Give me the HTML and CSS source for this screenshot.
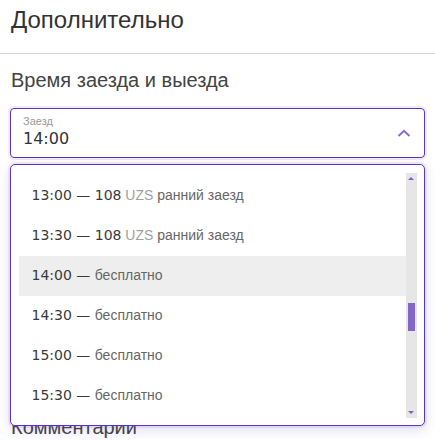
FILE: index.html
```html
<!DOCTYPE html>
<html lang="ru">
<head>
<meta charset="utf-8">
<title>Дополнительно</title>
<link rel="stylesheet" href="styles.css">
</head>
<body>
<div class="page">
  <h2 class="title">Дополнительно</h2>
  <hr class="divider">
  <section class="times">
    <h3 class="subtitle">Время заезда и выезда</h3>
    <div class="field">
      <div class="select">
        <div class="select-text">
          <span class="select-label">Заезд</span>
          <span class="select-value">14:00</span>
        </div>
        <svg class="caret" width="14" height="8" viewBox="0 0 14 8"><path d="M1.5 7 L7 1.8 L12.5 7" fill="none" stroke="#8a6bd2" stroke-width="2"/></svg>
      </div>
      <div class="dropdown">
        <ul class="options">
          <li class="option"><span class="time">13:00 — 108</span> <span class="cur">UZS</span> <span class="note">ранний заезд</span></li>
          <li class="option"><span class="time">13:30 — 108</span> <span class="cur">UZS</span> <span class="note">ранний заезд</span></li>
          <li class="option active"><span class="time">14:00 — </span><span class="note">бесплатно</span></li>
          <li class="option"><span class="time">14:30 — </span><span class="note">бесплатно</span></li>
          <li class="option"><span class="time">15:00 — </span><span class="note">бесплатно</span></li>
          <li class="option"><span class="time">15:30 — </span><span class="note">бесплатно</span></li>
        </ul>
        <div class="scrollbar">
          <span class="arrow up"></span>
          <div class="track"><span class="thumb"></span></div>
          <span class="arrow down"></span>
        </div>
      </div>
    </div>
  </section>
  <h3 class="subtitle comments">Комментарии</h3>
</div>
</body>
</html>
```
FILE: styles.css
```css
* { box-sizing: border-box; }

body {
  margin: 0;
  background: #fff;
  font-family: "Liberation Sans", Arial, sans-serif;
  color: #333;
}

.page {
  padding: 0 0 0 11px;
}

.title {
  margin: 0;
  padding-top: 6px;
  font-size: 24px;
  font-weight: normal;
  line-height: 28px;
  color: #333;
}

.divider {
  border: 0;
  border-top: 1px solid #d6d6d6;
  margin: 19px 0 0 -11px;
}

.subtitle {
  margin: 0;
  font-size: 20px;
  font-weight: normal;
  line-height: 24px;
  color: #444;
}

.times .subtitle {
  margin-top: 14px;
}

.field {
  position: relative;
  margin-top: 16px;
  width: 415px;
  margin-left: -1px;
}

.select {
  height: 50px;
  border: 1.5px solid #5d34c2;
  border-radius: 4px;
  box-shadow: 0 0 0 2px rgba(120, 90, 220, 0.12);
  display: flex;
  align-items: flex-start;
  justify-content: space-between;
  padding: 5.5px 13px 0 12px;
}

.select-text {
  display: flex;
  flex-direction: column;
  gap: 2px;
}

.select-label {
  font-size: 11px;
  line-height: 12px;
  color: #9a9a9a;
}

.select-value {
  font-family: "DejaVu Sans", Verdana, sans-serif;
  font-size: 16px;
  line-height: 20px;
  color: #333;
}

.caret {
  margin-top: 14px;
}

.dropdown {
  position: absolute;
  top: 56px;
  left: 0;
  width: 415px;
  height: 262px;
  background: #fff;
  border: 1.5px solid #5d34c2;
  border-radius: 5px;
  box-shadow: 0 0 0 2px rgba(120, 90, 220, 0.10), 0 4px 14px rgba(90, 60, 180, 0.18);
  display: flex;
  padding: 7.5px 7.5px 7px 7.5px;
  z-index: 2;
}

.options {
  list-style: none;
  margin: 0;
  padding: 3px 0 0;
  flex: 1;
  overflow: hidden;
}

.option {
  display: block;
  height: 40px;
  line-height: 38px;
  padding-left: 13px;
  font-size: 14px;
  white-space: pre;
}

.option.active {
  background: #eeeeee;
}

.time {
  font-family: "DejaVu Sans", Verdana, sans-serif;
  color: #3a3a3a;
}

.cur {
  color: #a0a0a0;
}

.note {
  color: #666;
}

.scrollbar {
  width: 11px;
  background: #e6e6e6;
  display: flex;
  flex-direction: column;
  align-items: center;
}

.arrow {
  width: 0;
  height: 0;
  border-left: 3px solid transparent;
  border-right: 3px solid transparent;
  margin: 4px 0;
}

.arrow.up { border-bottom: 3px solid #7e5ec8; }
.arrow.down { border-top: 3px solid #7e5ec8; }

.track {
  flex: 1;
  width: 100%;
  padding-top: 119px;
  display: flex;
  justify-content: center;
}

.thumb {
  width: 7px;
  height: 28px;
  background: #8466c6;
}

.comments {
  margin-top: 257px;
}
```
